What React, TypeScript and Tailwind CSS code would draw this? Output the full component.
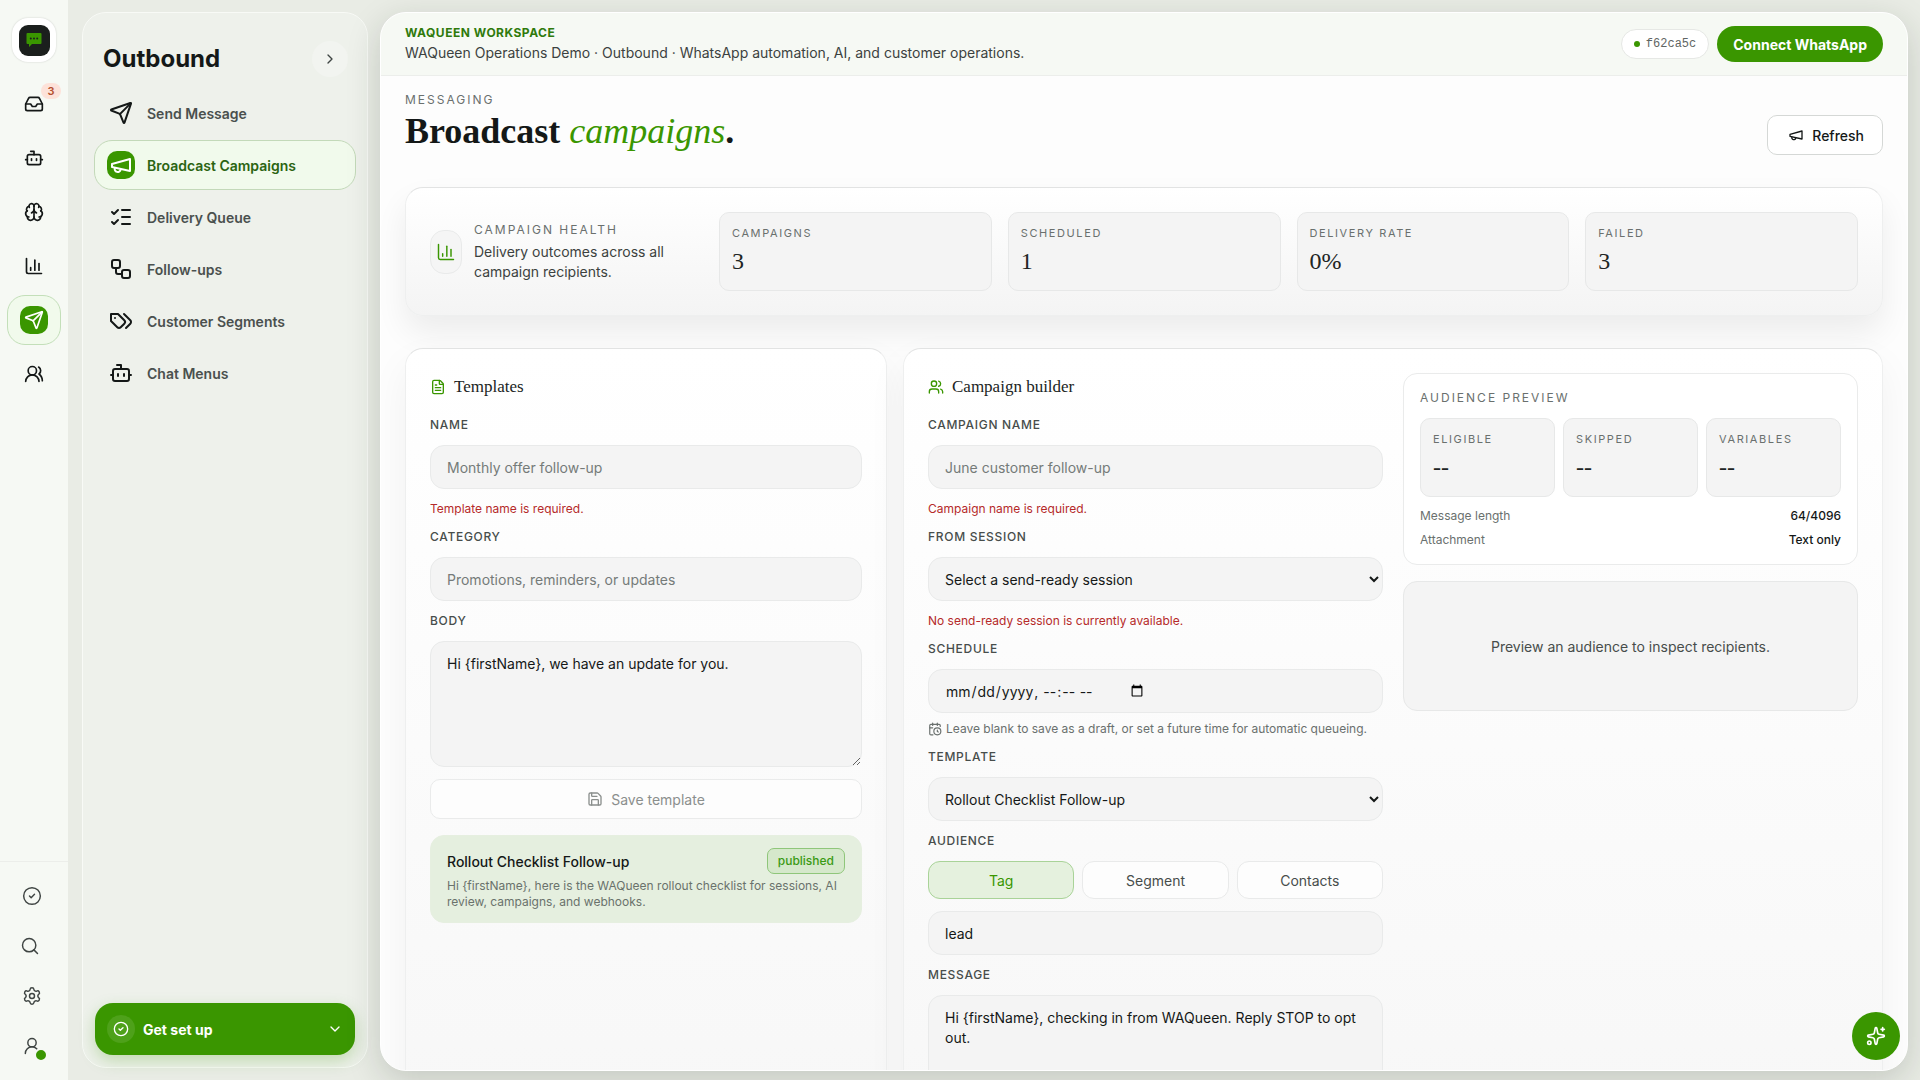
import type { ReactNode } from "react";
import {
  Bot, Brain, CalendarClock, ChartColumn, ChevronDown, ChevronRight, CircleCheck, FileText, Inbox, ListChecks,
  Save, Search, Send, Settings, Sparkles, UserRound, Users, UsersRound, Workflow,
} from "lucide-react";

const control =
  "w-full rounded-[14px] border border-[#e9eaea] bg-[#f4f4f4] px-4 text-[14px] text-[#141817] placeholder:text-[#757b79]";
const serif = "font-['Liberation_Serif',serif]";

function LineIcon({ size, children }: { size: number; children: ReactNode }) {
  return (
    <svg
      width={size}
      height={size}
      viewBox="0 0 24 24"
      fill="none"
      stroke="currentColor"
      strokeWidth="2"
      strokeLinecap="round"
      strokeLinejoin="round"
      aria-hidden="true"
    >
      {children}
    </svg>
  );
}

function MegaphoneIcon({ size }: { size: number }) {
  return (
    <LineIcon size={size}>
      <path d="m3 11 18-5v12L3 14v-3z" />
      <path d="M11.600 16.800a3 3 0 1 1-5.800-1.600" />
    </LineIcon>
  );
}

function TagsIcon({ size }: { size: number }) {
  return (
    <LineIcon size={size}>
      <path d="M9 5H2v7l6.290 6.290c.94.94 2.480.94 3.420 0l3.580-3.580c.94-.94.94-2.480 0-3.420L9 5Z" />
      <path d="M6 9.010V9" />
      <path d="m15 5 6.300 6.300a2.400 2.400 0 0 1 0 3.400L17 19" />
    </LineIcon>
  );
}

function RailItem({ label, children, active, badge }: { label: string; children: ReactNode; active?: boolean; badge?: string }) {
  return (
    <a
      href="#"
      aria-label={label}
      className={
        "relative flex h-[50px] w-[54px] items-center justify-center rounded-[18px] border text-[#141817] " +
        (active ? "border-[#c3dfb9] bg-[#f1faec]" : "border-transparent")
      }
    >
      <span className={active ? "flex size-7 items-center justify-center rounded-[10px] bg-[#3a9600] text-white" : "flex"}>
        {children}
      </span>
      {badge && (
        <span className="absolute top-[3px] -right-px flex h-4 w-5 items-center justify-center rounded-full bg-[#fde2d9] text-[11px] font-semibold text-[#b5502f]">
          {badge}
        </span>
      )}
    </a>
  );
}

function NavItem({ label, children, active }: { label: string; children: ReactNode; active?: boolean }) {
  return (
    <a
      href="#"
      className={
        "flex h-[50px] items-center gap-3 rounded-[18px] border px-3 text-[14px] font-semibold " +
        (active ? "border-[#c3d9b9] bg-[#f1faec] text-[#2b6412]" : "border-transparent text-[#4a504e]")
      }
    >
      <span
        className={
          "flex size-7 items-center justify-center rounded-[10px] " + (active ? "bg-[#3a9600] text-white" : "text-[#141817]")
        }
      >
        {children}
      </span>
      {label}
    </a>
  );
}

function Stat({ label, value }: { label: string; value: string }) {
  return (
    <div className="flex-1 rounded-[10px] border border-[#e7e8e8] bg-[#f4f4f4] px-3 pt-3 pb-[13px]">
      <div className="text-[11px] leading-4 tracking-[1.6px] text-[#6a706e]">{label}</div>
      <div className={"mt-1 text-[24px] leading-8 text-[#202423] " + serif}>{value}</div>
    </div>
  );
}

function Field({ id, label, children, error }: { id: string; label: string; children: ReactNode; error?: string }) {
  return (
    <div className="flex flex-col">
      <label htmlFor={id} className="mb-3 text-[12px] leading-4 font-medium tracking-[0.7px] text-[#474d4b]">
        {label}
      </label>
      {children}
      {error && <p className="mt-3 text-[12px] leading-4 text-[#b52a2a]">{error}</p>}
    </div>
  );
}

function PanelTitle({ icon, children }: { icon: ReactNode; children: ReactNode }) {
  return (
    <h2 className={"mb-4 flex h-7 items-center gap-2 text-[17px] text-[#202423] " + serif}>
      <span className="text-[#3a9600]">{icon}</span>
      {children}
    </h2>
  );
}

const panel =
  "rounded-[18px] border border-[#eeefef] border-t-[#e2e3e3] bg-linear-to-b from-white to-[#f7f7f7] p-6 shadow-[0_16px_40px_rgba(0,0,0,0.05)]";

export default function App() {
  return (
    <div className="flex h-screen overflow-hidden bg-[#e9ece5] font-[Inter,sans-serif] text-[14px] text-[#141817]">
      <nav aria-label="Main" className="flex w-[68px] shrink-0 flex-col items-center bg-[#f6f9f4] pt-[18px]">
        <a
          href="#"
          aria-label="WAQueen"
          className="mb-[17px] flex size-11 items-center justify-center rounded-[16px] bg-white shadow-[0_0_2px_rgba(0,0,0,0.18)]"
        >
          <span className="flex size-[31px] items-center justify-center rounded-[9px] bg-[#1b1f1d]">
            <svg width="16" height="16" viewBox="0 0 16 16" aria-hidden="true">
              <path d="M1.500 1h13a1 1 0 0 1 1 1v9a1 1 0 0 1-1 1H6L3 15v-3H1.500a1 1 0 0 1-1-1V2a1 1 0 0 1 1-1z" fill="#3a9600" />
              <circle cx="4.800" cy="6.500" r="1" fill="#1b1f1d" />
              <circle cx="8" cy="6.500" r="1" fill="#1b1f1d" />
              <circle cx="11.200" cy="6.500" r="1" fill="#1b1f1d" />
            </svg>
          </span>
        </a>
        <div className="flex flex-col gap-1">
          <RailItem label="Inbox" badge="3"><Inbox size={20} /></RailItem>
          <RailItem label="Bots"><Bot size={20} /></RailItem>
          <RailItem label="Knowledge"><Brain size={20} /></RailItem>
          <RailItem label="Analytics"><ChartColumn size={20} /></RailItem>
          <RailItem label="Outbound" active><Send size={20} /></RailItem>
          <RailItem label="Contacts"><UsersRound size={20} /></RailItem>
        </div>
        <div className="mt-auto flex w-full flex-col items-start gap-[10px] border-t border-[#eceeea] pt-[14px] pb-[14px] pl-3 text-[#3f4543]">
          <button type="button" aria-label="Status" className="flex size-10 items-center justify-center"><CircleCheck size={20} strokeWidth={1.75} /></button>
          <button type="button" aria-label="Search" className="flex h-10 w-9 items-center justify-center"><Search size={20} strokeWidth={1.75} /></button>
          <button type="button" aria-label="Settings" className="flex size-10 items-center justify-center"><Settings size={20} strokeWidth={1.75} /></button>
          <button type="button" aria-label="Account" className="relative flex size-10 items-center justify-center">
            <UserRound size={20} strokeWidth={1.75} />
            <span className="absolute right-1 bottom-1 size-[14px] rounded-full border-2 border-[#f6f9f4] bg-[#3a9600]" />
          </button>
        </div>
      </nav>

      <aside className="my-3 ml-[14px] flex w-[286px] shrink-0 flex-col rounded-[24px] border border-[#f8faf6] bg-[#eef1eb] px-[11px] pb-3">
        <div className="flex h-[75px] items-center justify-between pt-[17px] pr-2 pl-[9px]">
          <h1 className="text-[24px] leading-9 font-bold text-[#141817]">Outbound</h1>
          <button type="button" aria-label="Collapse" className="flex size-9 items-center justify-center rounded-full bg-[#f2f4f0] text-[#3f4543]">
            <ChevronRight size={16} />
          </button>
        </div>
        <div className="flex flex-col gap-[2px]">
          <NavItem label="Send Message"><Send size={24} /></NavItem>
          <NavItem label="Broadcast Campaigns" active><MegaphoneIcon size={24} /></NavItem>
          <NavItem label="Delivery Queue"><ListChecks size={24} /></NavItem>
          <NavItem label="Follow-ups"><Workflow size={24} /></NavItem>
          <NavItem label="Customer Segments"><TagsIcon size={24} /></NavItem>
          <NavItem label="Chat Menus"><Bot size={24} /></NavItem>
        </div>
        <button type="button" className="mx-px mt-auto flex h-[52px] items-center gap-2 rounded-[18px] bg-[#3a9600] px-3 text-[14px] font-bold text-white shadow-[0_6px_16px_rgba(58,150,0,0.25)]">
          <span className="flex size-7 items-center justify-center rounded-full bg-white/10"><CircleCheck size={16} /></span>
          Get set up
          <ChevronDown size={16} className="ml-auto" />
        </button>
      </aside>

      <main className="mt-3 mr-3 mb-[9px] ml-3 flex min-w-0 flex-1 flex-col overflow-hidden rounded-[26px] border border-white bg-[#fdfdfd] shadow-[0_10px_34px_rgba(30,40,30,0.18)]">
        <header className="flex h-[63px] shrink-0 items-center justify-between border-b border-[#eceeeb] bg-[#f6f9f4] px-6">
          <div>
            <div className="text-[12px] leading-4 font-bold tracking-[0.5px] text-[#2f7a0c]">WAQUEEN WORKSPACE</div>
            <div className="mt-[2px] text-[14px] leading-5 text-[#3c4240]">
              WAQueen Operations Demo · Outbound · WhatsApp automation, AI, and customer operations.
            </div>
          </div>
          <div className="flex items-center gap-2">
            <span className="flex h-[30px] items-center gap-[6px] rounded-full border border-[#e6e8e5] bg-white px-3 font-['Liberation_Mono',monospace] text-[12px] text-[#5f6563]">
              <span className="size-[6px] rounded-full bg-[#3a9600]" />
              f62ca5c
            </span>
            <button type="button" className="h-9 rounded-full bg-[#3a9600] px-4 text-[14px] font-bold text-white">
              Connect WhatsApp
            </button>
          </div>
        </header>

        <div className="flex min-h-0 flex-1 flex-col overflow-hidden px-6">
          <div className="flex h-[111px] shrink-0 items-start justify-between pt-4">
            <div>
              <div className="text-[12px] leading-4 tracking-[2px] text-[#6a706e]">MESSAGING</div>
              <div className={"text-[36px] leading-[46px] font-bold text-[#141817] " + serif}>
                Broadcast <em className="font-normal text-[#3a9600]">campaigns</em>.
              </div>
            </div>
            <button type="button" className="mt-[23px] flex h-10 items-center gap-2 rounded-[10px] border border-[#d5d8d6] bg-white pr-[18px] pl-5 text-[14px] font-medium">
              <MegaphoneIcon size={16} />
              Refresh
            </button>
          </div>

          <section className="flex shrink-0 items-center rounded-[18px] border border-[#eeefef] border-t-[#e2e3e3] bg-linear-to-b from-white to-[#f4f4f4] p-6 shadow-[0_16px_32px_rgba(0,0,0,0.07)]">
            <div className="flex w-[289px] shrink-0 items-center gap-3">
              <span className="flex h-11 w-8 shrink-0 items-center justify-center rounded-[14px] border border-[#e9eaea] bg-[#f5f5f5] text-[#3a9600]">
                <ChartColumn size={20} strokeWidth={1.75} />
              </span>
              <div className="w-[210px]">
                <div className="text-[12px] leading-4 tracking-[2px] text-[#6a706e]">CAMPAIGN HEALTH</div>
                <p className="mt-1 text-[14px] leading-5 text-[#3c4240]">Delivery outcomes across all campaign recipients.</p>
              </div>
            </div>
            <div className="flex flex-1 gap-4">
              <Stat label="CAMPAIGNS" value="3" />
              <Stat label="SCHEDULED" value="1" />
              <Stat label="DELIVERY RATE" value="0%" />
              <Stat label="FAILED" value="3" />
            </div>
          </section>

          <div className="mt-8 grid shrink-0 grid-cols-[482fr_980fr] gap-4">
            <section className={panel}>
              <PanelTitle icon={<FileText size={16} />}>Templates</PanelTitle>
              <div className="flex flex-col gap-3">
                <Field id="tpl-name" label="NAME" error="Template name is required.">
                  <input id="tpl-name" placeholder="Monthly offer follow-up" className={control + " h-11"} />
                </Field>
                <Field id="tpl-category" label="CATEGORY">
                  <input id="tpl-category" placeholder="Promotions, reminders, or updates" className={control + " h-11"} />
                </Field>
                <Field id="tpl-body" label="BODY">
                  <textarea id="tpl-body" defaultValue="Hi {firstName}, we have an update for you." className={control + " block h-[126px] py-3 leading-5"} />
                </Field>
                <button type="button" disabled className="flex h-10 items-center justify-center gap-2 rounded-[10px] border border-[#eaebeb] bg-[#fdfdfd] text-[14px] text-[#8b8f8d]">
                  <Save size={16} />
                  Save template
                </button>
              </div>
              <button type="button" className="mt-4 w-full rounded-[14px] border border-[#e6efe0] bg-[#e5efdf] px-4 py-3 text-left">
                <span className="flex items-center justify-between">
                  <span className="text-[14px] font-medium">Rollout Checklist Follow-up</span>
                  <span className="flex h-[26px] items-center rounded-[7px] border border-[#8fc67a] bg-[#d5e8cb] px-[10px] text-[12px] font-medium text-[#3a9a14]">
                    published
                  </span>
                </span>
                <span className="mt-1 block text-[12px] leading-4 text-[#6a726c]">
                  {"Hi {firstName}, here is the WAQueen rollout checklist for sessions, AI review, campaigns, and webhooks."}
                </span>
              </button>
            </section>

            <section className={panel + " grid grid-cols-2 items-start gap-5"}>
              <div>
                <PanelTitle icon={<Users size={16} />}>Campaign builder</PanelTitle>
                <div className="flex flex-col gap-3">
                  <Field id="c-name" label="CAMPAIGN NAME" error="Campaign name is required.">
                    <input id="c-name" placeholder="June customer follow-up" className={control + " h-11"} />
                  </Field>
                  <Field id="c-session" label="FROM SESSION" error="No send-ready session is currently available.">
                    <select id="c-session" className={control + " h-11 pr-0 pl-3"}>
                      <option>Select a send-ready session</option>
                    </select>
                  </Field>
                  <Field id="c-schedule" label="SCHEDULE">
                    <input
                      id="c-schedule"
                      type="datetime-local"
                      className={control + " h-11 [&::-webkit-datetime-edit]:flex-none"}
                    />
                    <p className="mt-2 flex items-center gap-1 text-[12px] leading-4 text-[#6a706e]">
                      <CalendarClock size={14} />
                      Leave blank to save as a draft, or set a future time for automatic queueing.
                    </p>
                  </Field>
                  <Field id="c-template" label="TEMPLATE">
                    <select id="c-template" className={control + " h-11 pr-0 pl-3"}>
                      <option>Rollout Checklist Follow-up</option>
                    </select>
                  </Field>
                  <Field id="c-audience" label="AUDIENCE">
                    <div className="mb-3 grid grid-cols-3 gap-2 text-[14px] text-[#474d4b]">
                      <button type="button" className="h-[38px] rounded-[12px] border border-[#a9d398] bg-[#e5f1de] text-[#3a9600]">Tag</button>
                      <button type="button" className="h-[38px] rounded-[12px] border border-[#e9eaea] bg-[#fdfdfd]">Segment</button>
                      <button type="button" className="h-[38px] rounded-[12px] border border-[#e9eaea] bg-[#fdfdfd]">Contacts</button>
                    </div>
                    <input id="c-audience" defaultValue="lead" className={control + " h-11"} />
                  </Field>
                  <Field id="c-message" label="MESSAGE">
                    <textarea
                      id="c-message"
                      defaultValue="Hi {firstName}, checking in from WAQueen. Reply STOP to opt out."
                      className={control + " block h-[126px] py-3 leading-5"}
                    />
                  </Field>
                </div>
              </div>
              <div className="flex flex-col gap-4">
                <div className="rounded-[14px] border border-[#eaebeb] bg-white p-4">
                  <h3 className="text-[12px] leading-4 tracking-[2px] text-[#6a706e]">AUDIENCE PREVIEW</h3>
                  <div className="mt-3 mb-[11px] flex gap-2">
                    <Stat label="ELIGIBLE" value="--" />
                    <Stat label="SKIPPED" value="--" />
                    <Stat label="VARIABLES" value="--" />
                  </div>
                  <dl className="flex flex-col gap-2 text-[12px] leading-4">
                    <div className="flex justify-between">
                      <dt className="text-[#6a706e]">Message length</dt>
                      <dd className="font-medium">64/4096</dd>
                    </div>
                    <div className="flex justify-between">
                      <dt className="text-[#6a706e]">Attachment</dt>
                      <dd className="font-medium">Text only</dd>
                    </div>
                  </dl>
                </div>
                <div className="flex h-[130px] items-center justify-center rounded-[14px] border border-[#e7e8e8] bg-[#f4f4f4] text-[14px] text-[#474d4b]">
                  Preview an audience to inspect recipients.
                </div>
              </div>
            </section>
          </div>
        </div>
      </main>

      <button type="button" aria-label="Assistant" className="fixed right-5 bottom-5 flex size-12 items-center justify-center rounded-full bg-[#3a9600] text-white">
        <Sparkles size={20} />
      </button>
    </div>
  );
}
